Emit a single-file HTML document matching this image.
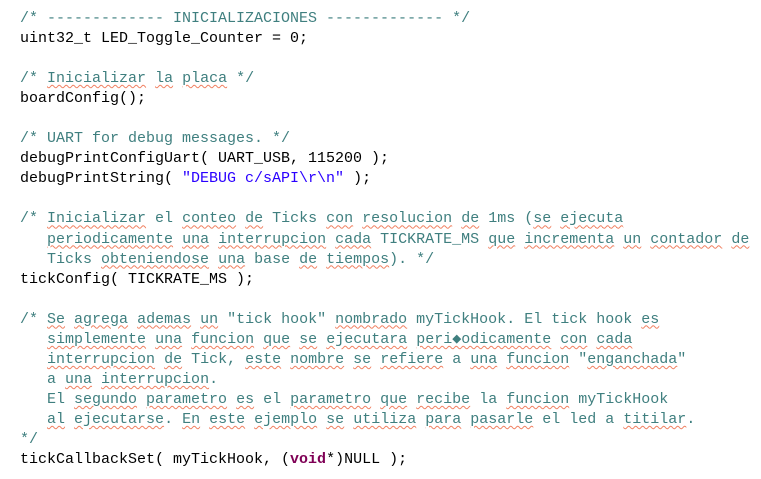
<!DOCTYPE html>
<html><head><meta charset="utf-8"><style>
body{margin:0;background:#fff;width:761px;height:479px;overflow:hidden}
pre{margin:0;padding:9px 0 0 20px;font-family:"Liberation Mono","DejaVu Sans Mono",monospace;font-size:15px;line-height:20.05px;color:#000}
.c{color:#3f7f7f}
.str{color:#2a00ff}
.k{color:#7f0055;font-weight:bold}
.s{text-decoration:underline wavy #f08060;text-decoration-thickness:1px;text-underline-offset:2px}
</style></head><body><pre><span class="c">/* ------------- INICIALIZACIONES ------------- */</span>
uint32_t LED_Toggle_Counter = 0;

<span class="c">/* <span class="s">Inicializar</span> <span class="s">la</span> <span class="s">placa</span> */</span>
boardConfig();

<span class="c">/* UART for debug messages. */</span>
debugPrintConfigUart( UART_USB, 115200 );
debugPrintString( <span class="str">"DEBUG c/sAPI\r\n"</span> );

<span class="c">/* <span class="s">Inicializar</span> el <span class="s">conteo</span> <span class="s">de</span> Ticks <span class="s">con</span> <span class="s">resolucion</span> <span class="s">de</span> 1ms (<span class="s">se</span> <span class="s">ejecuta</span>
   <span class="s">periodicamente</span> <span class="s">una</span> <span class="s">interrupcion</span> <span class="s">cada</span> TICKRATE_MS <span class="s">que</span> <span class="s">incrementa</span> <span class="s">un</span> <span class="s">contador</span> <span class="s">de</span>
   Ticks <span class="s">obteniendose</span> <span class="s">una</span> base <span class="s">de</span> <span class="s">tiempos</span>). */</span>
tickConfig( TICKRATE_MS );

<span class="c">/* <span class="s">Se</span> <span class="s">agrega</span> <span class="s">ademas</span> <span class="s">un</span> "tick hook" <span class="s">nombrado</span> myTickHook. El tick hook <span class="s">es</span>
   <span class="s">simplemente</span> <span class="s">una</span> <span class="s">funcion</span> <span class="s">que</span> <span class="s">se</span> <span class="s">ejecutara</span> <span class="s">peri◆odicamente</span> <span class="s">con</span> <span class="s">cada</span>
   <span class="s">interrupcion</span> <span class="s">de</span> Tick, <span class="s">este</span> <span class="s">nombre</span> <span class="s">se</span> <span class="s">refiere</span> a <span class="s">una</span> <span class="s">funcion</span> "<span class="s">enganchada</span>"
   a <span class="s">una</span> <span class="s">interrupcion</span>.
   El <span class="s">segundo</span> <span class="s">parametro</span> <span class="s">es</span> el <span class="s">parametro</span> <span class="s">que</span> <span class="s">recibe</span> la <span class="s">funcion</span> myTickHook
   <span class="s">al</span> <span class="s">ejecutarse</span>. <span class="s">En</span> <span class="s">este</span> <span class="s">ejemplo</span> <span class="s">se</span> <span class="s">utiliza</span> <span class="s">para</span> <span class="s">pasarle</span> el led a <span class="s">titilar</span>.
*/</span>
tickCallbackSet( myTickHook, (<span class="k">void</span>*)NULL );</pre></body></html>
